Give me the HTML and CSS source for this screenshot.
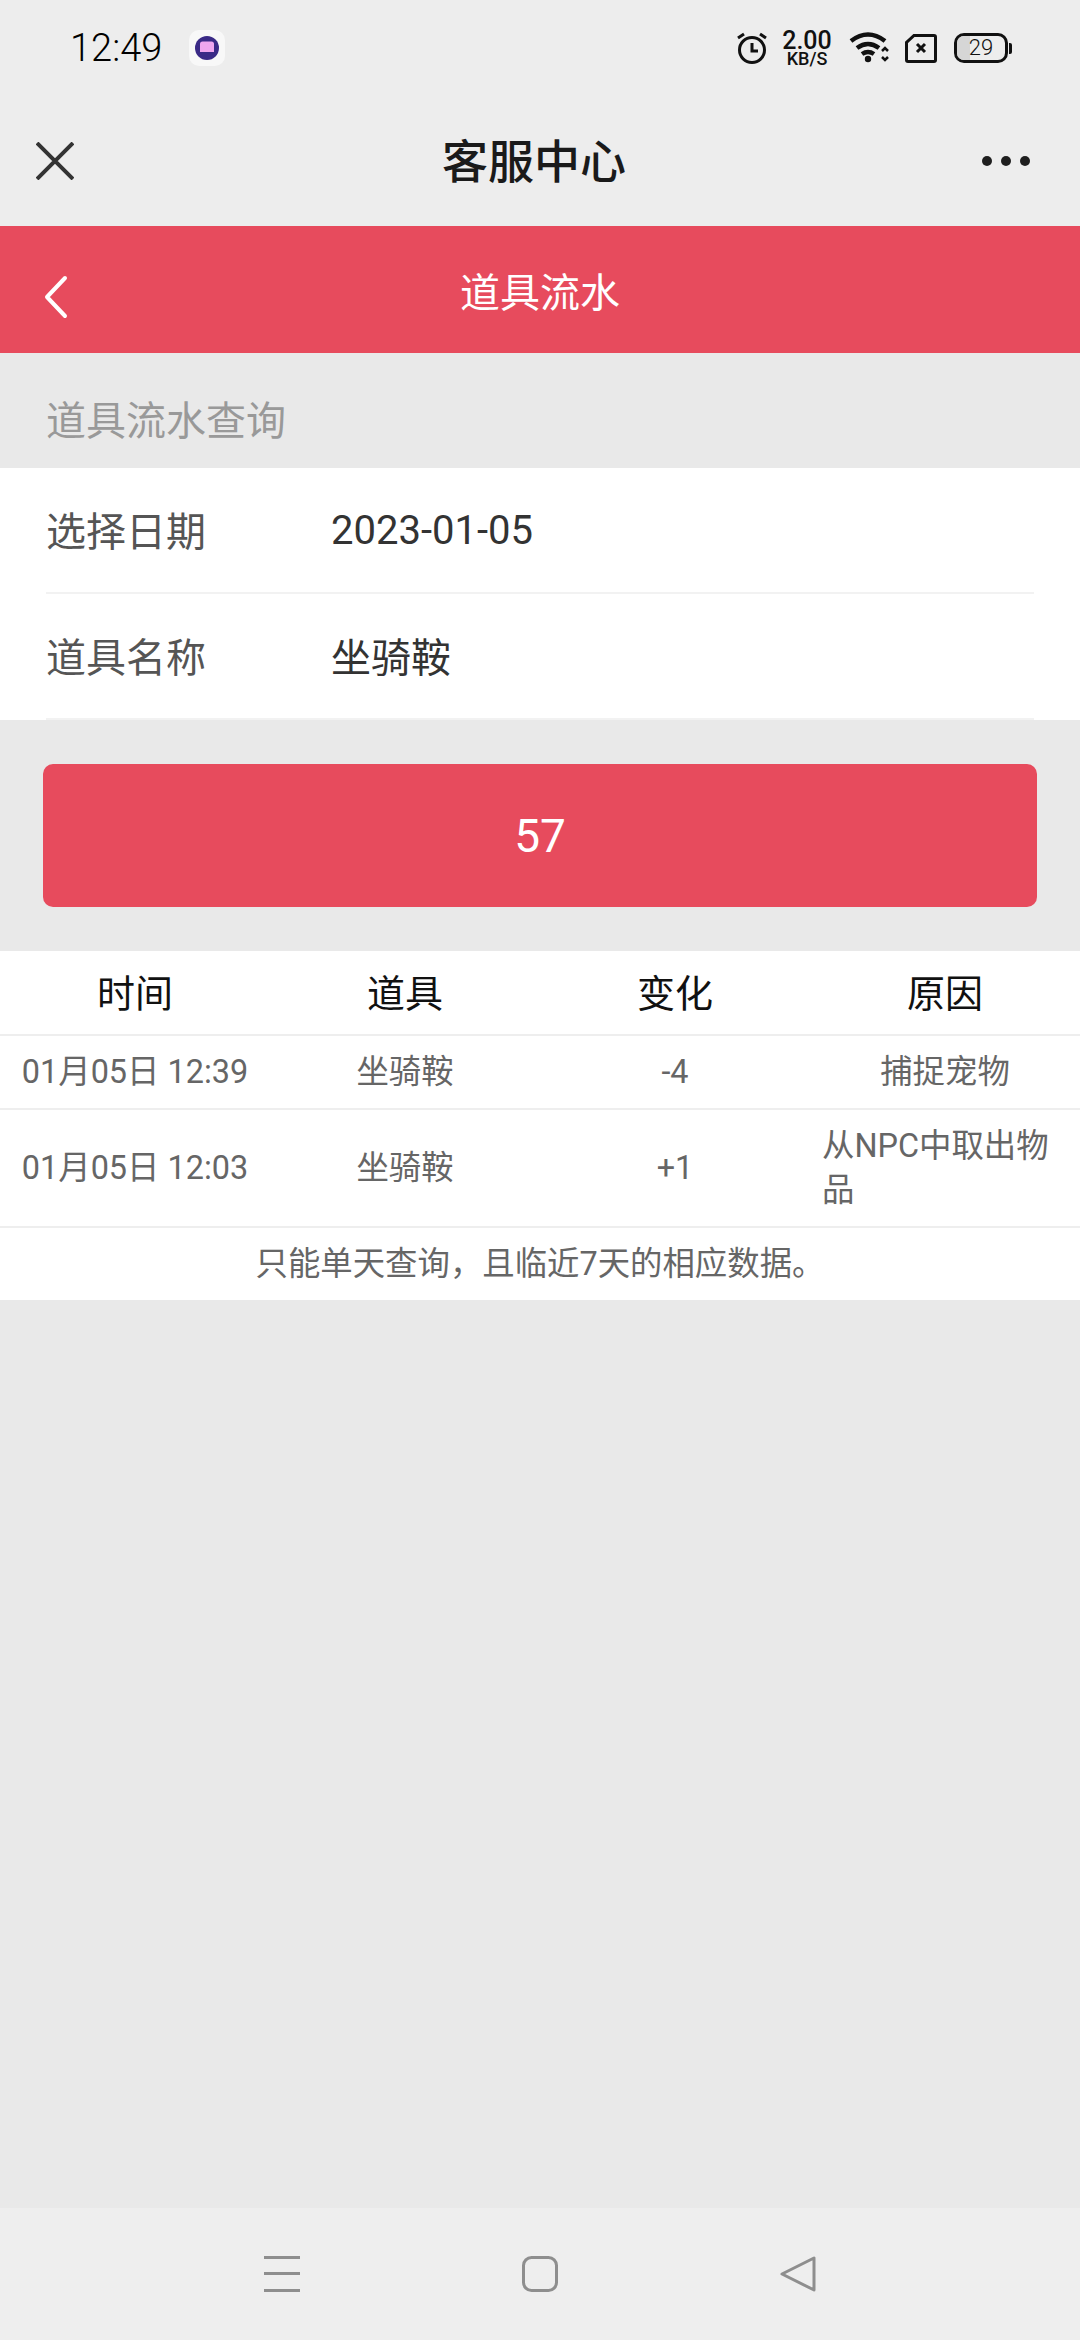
FILE: index.html
```html
<!doctype html>
<html>
<head>
  <meta charset="utf-8"/>
  <title>客服中心</title>
  <link rel="stylesheet" href="styles.css">
</head>
<body>
  <div id="page">
    <div class="status">
      <span class="clock">12:49</span>
      <div class="app-badge">
        <svg width="26" height="26" viewBox="0 0 26 26"><circle cx="13" cy="13" r="12" fill="#3a2a86"/><path d="M6 9q0-2.500 2.500-2.500h9q2.500 0 2.500 2.500v8h-14z" fill="#eea6ee"/></svg>
      </div>
      <div class="status-right">
        <svg class="alarm" width="32" height="32" viewBox="0 0 32 32" fill="none" stroke="#111" stroke-width="3"><circle cx="16" cy="18" r="12.500"/><path d="M16 11v8h6M2 6l6-4M30 6l-6-4"/></svg>
        <div class="speed"><b>2.00</b><span>KB/S</span></div>
        <svg class="wifi" width="42" height="32" viewBox="0 0 42 32" fill="none" stroke="#111" stroke-width="4.500"><path d="M2 9q17-13 34 0M8 16q11-8 22 0M13 22q6-4 12 0"/><circle cx="19" cy="27" r="3.200" fill="#111" stroke="none"/><path d="M33 19l3-3 3 3M33 25l3 3 3-3" stroke-width="2.500"/></svg>
        <svg class="sim" width="32" height="29" viewBox="0 0 32 29" fill="none" stroke="#111" stroke-width="3"><path d="M9 1.500h20q1.500 0 1.500 1.500v23q0 1.500-1.500 1.500h-26q-1.500 0-1.500-1.500v-17.500z"/><path d="M12 10l8 8M20 10l-8 8"/></svg>
        <div class="battery"><div class="battery-body"><div class="battery-fill"></div><span>29</span></div><div class="battery-nub"></div></div>
      </div>
    </div>

    <div class="nav">
      <svg class="nav-close" width="38" height="38" viewBox="0 0 38 38" fill="none" stroke="#333" stroke-width="4"><path d="M1 1l36 36M37 1l-36 36"/></svg>
      <div class="nav-title">客服中心</div>
      <div class="nav-more"><i></i><i></i><i></i></div>
    </div>

    <div class="header">
      <svg class="back" width="24" height="44" viewBox="0 0 24 44" fill="none" stroke="#fff" stroke-width="4" stroke-linecap="round" stroke-linejoin="round"><path d="M21 3l-18 19 18 19"/></svg>
      <div class="header-title">道具流水</div>
    </div>

    <div class="main">
      <div class="section-title">道具流水查询</div>
      <div class="form">
        <div class="form-row">
          <div class="form-label">选择日期</div>
          <div class="form-value form-date">2023-01-05</div>
        </div>
        <div class="form-row">
          <div class="form-label">道具名称</div>
          <div class="form-value">坐骑鞍</div>
        </div>
      </div>
      <div class="btn-wrap">
        <div class="btn">57</div>
      </div>
      <div class="table">
        <div class="tr th">
          <div class="td">时间</div>
          <div class="td">道具</div>
          <div class="td">变化</div>
          <div class="td">原因</div>
        </div>
        <div class="tr row-a">
          <div class="td">01月05日 12:39</div>
          <div class="td">坐骑鞍</div>
          <div class="td">-4</div>
          <div class="td">捕捉宠物</div>
        </div>
        <div class="tr row-b">
          <div class="td">01月05日 12:03</div>
          <div class="td">坐骑鞍</div>
          <div class="td">+1</div>
          <div class="td td-left">从NPC中取出物品</div>
        </div>
        <div class="note">只能单天查询，且临近7天的相应数据。</div>
      </div>
    </div>

    <div class="sysbar">
      <svg width="36" height="36" viewBox="0 0 36 36" fill="#8e8e8e"><rect y="0" width="36" height="3"/><rect y="16" width="36" height="3"/><rect y="33" width="36" height="3"/></svg>
      <svg width="36" height="36" viewBox="0 0 36 36" fill="none" stroke="#8e8e8e" stroke-width="3"><rect x="1.500" y="1.500" width="33" height="33" rx="8"/></svg>
      <svg width="36" height="36" viewBox="0 0 36 36" fill="none" stroke="#8e8e8e" stroke-width="3" stroke-linejoin="round"><path d="M34 2v32l-32-16z"/></svg>
    </div>
  </div>
</body>
</html>
```

FILE: styles.css
```css
html, body {
  margin: 0;
  width: 100%;
  height: 100%;
  overflow: hidden;
  font-family: Roboto, "Noto Sans CJK SC", sans-serif;
}
#page {
  width: 1080px;
  height: 2340px;
  display: flex;
  flex-direction: column;
  background: #e9e9e9;
}

/* 状态栏 */
.status {
  height: 96px;
  background: #ededed;
  display: flex;
  align-items: center;
  padding-left: 70px;
  padding-right: 68px;
  color: #111;
}
.clock {
  font-size: 38px;
  font-weight: 300;
  color: #000;
  width: 119px;
}
.app-badge {
  width: 36px;
  height: 36px;
  border-radius: 10px;
  background: #f8f8f8;
  display: flex;
  align-items: center;
  justify-content: center;
}
.status-right {
  margin-left: auto;
  display: flex;
  align-items: center;
}
.speed {
  margin-left: 13px;
  width: 52px;
  display: flex;
  flex-direction: column;
  align-items: center;
  line-height: 1;
}
.speed b {
  font-size: 25px;
  font-weight: 500;
  line-height: 21px;
}
.speed span {
  font-size: 18px;
  font-weight: 500;
  line-height: 16px;
}
.wifi {
  margin-left: 16px;
}
.sim {
  margin-left: 14px;
}
.battery {
  margin-left: 17px;
  display: flex;
  align-items: center;
}
.battery-body {
  position: relative;
  width: 54px;
  height: 30px;
  box-sizing: border-box;
  border: 3px solid #111;
  border-radius: 10px;
  overflow: hidden;
  display: flex;
  align-items: center;
  justify-content: center;
}
.battery-fill {
  position: absolute;
  left: 0;
  top: 0;
  bottom: 0;
  width: 13px;
  background: #d6d6d6;
}
.battery-body span {
  position: relative;
  font-size: 22px;
  font-weight: 300;
  line-height: 1;
}
.battery-nub {
  width: 3px;
  height: 11px;
  margin-left: 1px;
  background: #111;
  border-radius: 0 2px 2px 0;
}

/* 标题栏 */
.nav {
  height: 130px;
  background: #ededed;
  display: flex;
  align-items: center;
  padding-left: 36px;
  padding-right: 50px;
  box-sizing: border-box;
}
.nav-title {
  margin-left: 368px;
  margin-top: -6px;
  font-size: 46px;
  font-weight: 500;
  color: #1a1a1a;
}
.nav-more {
  margin-left: auto;
  display: flex;
  gap: 9px;
}
.nav-more i {
  width: 10px;
  height: 10px;
  border-radius: 50%;
  background: #1f1f1f;
}

.header {
  height: 127px;
  background: #e74b5d;
  display: flex;
  align-items: center;
  position: relative;
  padding-left: 44px;
}
.back {
  margin-top: 14px;
}
.header-title {
  position: absolute;
  left: 0;
  right: 0;
  top: 40px;
  text-align: center;
  font-size: 40px;
  line-height: 56px;
  color: #fff;
}

.main {
  flex: 1;
}
.section-title {
  height: 115px;
  box-sizing: border-box;
  padding: 41px 46px 0;
  font-size: 40px;
  line-height: 56px;
  color: #999;
}
.form {
  background: #fff;
  height: 252px;
  padding: 0 46px;
}
.form-row {
  height: 126px;
  box-sizing: border-box;
  border-bottom: 2px solid #f2f2f2;
  padding-bottom: 2px;
  display: flex;
  align-items: center;
  font-size: 40px;
}
.form-label {
  width: 285px;
  color: #555;
}
.form-value {
  color: #333;
}
.form-date {
  margin-top: 2px;
}
.btn-wrap {
  padding: 44px 43px;
}
.btn {
  height: 143px;
  border-radius: 10px;
  background: #e74b5d;
  color: #fff;
  font-size: 46px;
  display: flex;
  align-items: center;
  justify-content: center;
}

.table {
  background: #fff;
}
.tr {
  display: grid;
  grid-template-columns: repeat(4, 1fr);
  border-bottom: 2px solid #eee;
  box-sizing: border-box;
  font-size: 32.4px;
  color: #666;
}
.td {
  display: flex;
  align-items: center;
  justify-content: center;
  padding: 0 12px;
  line-height: 44px;
}
.td-left {
  justify-content: flex-start;
}
.th {
  height: 85px;
  font-size: 38px;
  color: #111;
  padding-top: 2px;
}
.row-a {
  height: 74px;
}
.row-b {
  height: 118px;
}
.note {
  height: 72px;
  line-height: 72px;
  text-align: center;
  font-size: 32.4px;
  color: #666;
}

/* 底部导航 */
.sysbar {
  height: 132px;
  background: #eee;
  display: flex;
  align-items: center;
  padding: 0 264px;
  justify-content: space-between;
  box-sizing: border-box;
}
```
